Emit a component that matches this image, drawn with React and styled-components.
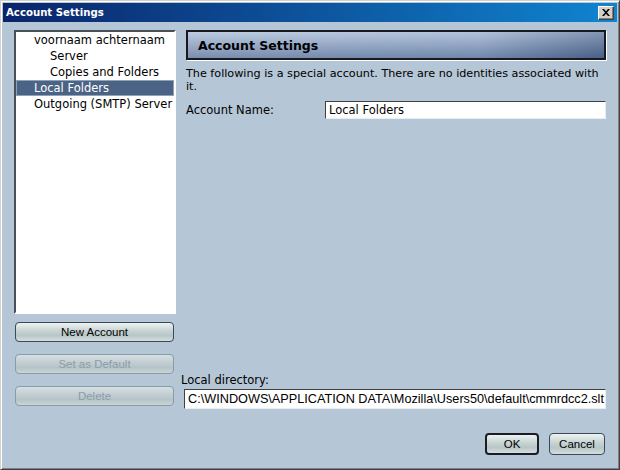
import React from 'react';
import styled, { createGlobalStyle } from 'styled-components';

const GlobalStyle = createGlobalStyle`
  html, body {
    margin: 0;
    padding: 0;
    background: #d4d0c8;
  }
`

const Window = styled.div`
  width: 620px;
  height: 470px;
  box-sizing: border-box;
  display: flex;
  flex-direction: column;
  background: #b5c6d6;
  border-style: solid;
  border-width: 1px;
  border-color: #d4d0c8 #404040 #404040 #d4d0c8;
  box-shadow: inset 1px 1px 0 #fff, inset -1px -1px 0 #808080;
  padding: 2px 2px 3px 2px;
  font-family: "DejaVu Sans", Verdana, sans-serif;
  font-size: 11.5px;
  color: #000;
`

const TitleBar = styled.div`
  height: 19px;
  display: flex;
  align-items: center;
  justify-content: space-between;
  padding: 0 3px 0 3px;
  background: linear-gradient(to right, #0a246a, #1084d0);
  color: #fff;
  font-family: "DejaVu Sans Condensed", "DejaVu Sans", sans-serif;
  font-weight: bold;
  font-size: 11.3px;
`

const CloseButton = styled.div`
  width: 16px;
  height: 14px;
  box-sizing: border-box;
  background: #d4d0c8;
  border-style: solid;
  border-width: 1px;
  border-color: #fff #404040 #404040 #fff;
  box-shadow: inset -1px -1px 0 #808080;
  display: flex;
  align-items: center;
  justify-content: center;
`

const Body = styled.div`
  flex: 1;
  display: flex;
  flex-direction: column;
  padding: 8px 11px 11px 11px;
`

const Main = styled.div`
  flex: 1;
  display: flex;
  gap: 5px;
`

const LeftColumn = styled.div`
  width: 162px;
  flex-shrink: 0;
  display: flex;
  flex-direction: column;
`

const Tree = styled.div`
  height: 284px;
  box-sizing: border-box;
  background: #fff;
  border-style: solid;
  border-width: 2px;
  border-color: #4a5058 #fff #fff #4a5058;
  overflow: hidden;
`

const TreeRow = styled.div`
  height: 16px;
  line-height: 16px;
  padding-left: ${p => 18 + p.$level * 16}px;
  white-space: nowrap;
  background: ${p => (p.$selected ? '#4b6385' : 'transparent')};
  color: ${p => (p.$selected ? '#fff' : '#000')};
  box-shadow: ${p => (p.$selected ? 'inset 0 0 0 1px #8ea2b8' : 'none')};
`

const SideButtons = styled.div`
  display: flex;
  flex-direction: column;
  gap: 12px;
  margin-top: 8px;
  padding-left: 1px;
  padding-right: 2px;
`

const Button = styled.button`
  height: ${p => p.$height || 20}px;
  width: ${p => p.$width || 'auto'};
  box-sizing: border-box;
  border-radius: 4px;
  border: ${p => (p.$primary ? '2px solid #1a1e24' : '1px solid #3c4856')};
  background: linear-gradient(to bottom, #eef2f2 0%, #c6d2d2 45%, #b8c6c8 70%, #d6dede 100%);
  font-family: "Liberation Sans", Arial, sans-serif;
  font-size: 11.5px;
  color: #000;
  padding: 0;
  &:disabled {
    border-color: #8a9aa8;
    color: #8c9ca8;
    background: linear-gradient(to bottom, #d6e0e2 0%, #c0ccd0 45%, #b6c4c8 70%, #c8d4d6 100%);
  }
`

const RightColumn = styled.div`
  flex: 1;
  min-width: 0;
  display: flex;
  flex-direction: column;
`

const Header = styled.div`
  margin-left: 5px;
  height: 30px;
  box-sizing: border-box;
  display: flex;
  align-items: center;
  padding-left: 10px;
  border: 2px solid #161a20;
  box-shadow: 1px 1px 0 #fff;
  background:
    linear-gradient(to bottom, rgba(255,255,255,0.25), rgba(40,60,100,0.35)),
    linear-gradient(to right, #a6bad6 0%, #98aed0 70%, #5a7298 100%);
  font-weight: bold;
  font-size: 12.5px;
`

const Description = styled.p`
  margin: 7px 0 0 5px;
  line-height: 13px;
  font-size: 11.2px;
`

const FieldRow = styled.div`
  display: flex;
  align-items: center;
  margin: 8px 0 0 5px;
`

const FieldLabel = styled.span`
  width: 139px;
  flex-shrink: 0;
`

const TextInput = styled.div`
  flex: 1;
  min-width: 0;
  height: ${p => p.$height || 18}px;
  line-height: ${p => (p.$height || 18) - 2}px;
  box-sizing: border-box;
  background: #fff;
  border-style: solid;
  border-width: 1px;
  border-color: #404040 #e8eef2 #e8eef2 #404040;
  padding-left: 3px;
  white-space: nowrap;
  overflow: hidden;
  font-family: ${p => (p.$sans ? '"Liberation Sans", Arial, sans-serif' : 'inherit')};
  font-size: ${p => (p.$sans ? '12.7px' : '11.5px')};
`

const Spacer = styled.div`
  flex: 1;
`

const DirLabel = styled.div`
  margin-bottom: 2px;
`

const DirInput = styled.div`
  margin-left: 3px;
  display: flex;
`

const Footer = styled.div`
  display: flex;
  justify-content: flex-end;
  gap: 10px;
  margin-top: 24px;
  padding-right: 1px;
`

const accountTree = [
  { label: 'voornaam achternaam', level: 0 },
  { label: 'Server', level: 1 },
  { label: 'Copies and Folders', level: 1 },
  { label: 'Local Folders', level: 0, selected: true },
  { label: 'Outgoing (SMTP) Server', level: 0 },
]

export default function App() {
  return (
    <Window>
      <GlobalStyle />
      <TitleBar>
        <span>Account Settings</span>
        <CloseButton>
          <svg width="8" height="7" viewBox="0 0 8 7">
            <path d="M0 0h2l2 2.2L6 0h2L5 3.5 8 7H6L4 4.8 2 7H0l3-3.5z" fill="#000" />
          </svg>
        </CloseButton>
      </TitleBar>
      <Body>
        <Main>
          <LeftColumn>
            <Tree>
              {accountTree.map(item => (
                <TreeRow key={item.label} $level={item.level} $selected={item.selected}>
                  {item.label}
                </TreeRow>
              ))}
            </Tree>
            <SideButtons>
              <Button>New Account</Button>
              <Button disabled>Set as Default</Button>
              <Button disabled>Delete</Button>
            </SideButtons>
          </LeftColumn>
          <RightColumn>
            <Header>Account Settings</Header>
            <Description>
              The following is a special account. There are no identities associated with it.
            </Description>
            <FieldRow>
              <FieldLabel>Account Name:</FieldLabel>
              <TextInput>Local Folders</TextInput>
            </FieldRow>
            <Spacer />
            <DirLabel>Local directory:</DirLabel>
            <DirInput>
              <TextInput $height={20} $sans>
                C:\WINDOWS\APPLICATION DATA\Mozilla\Users50\default\cmmrdcc2.slt
              </TextInput>
            </DirInput>
          </RightColumn>
        </Main>
        <Footer>
          <Button $primary $height={22} $width="54px">OK</Button>
          <Button $height={22} $width="56px">Cancel</Button>
        </Footer>
      </Body>
    </Window>
  );
}
